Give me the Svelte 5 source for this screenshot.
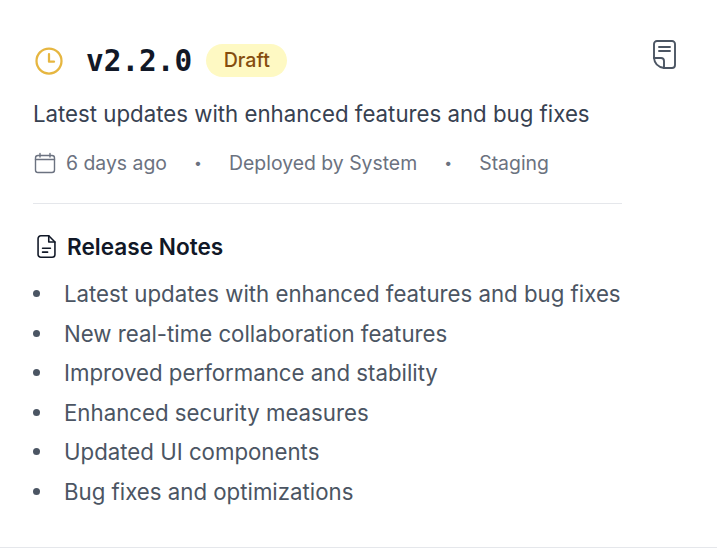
<script>
  const notes = [
    'Latest updates with enhanced features and bug fixes',
    'New real-time collaboration features',
    'Improved performance and stability',
    'Enhanced security measures',
    'Updated UI components',
    'Bug fixes and optimizations'
  ];
</script>

<main class="release">
  <div class="head">
    <div class="main-col">
      <div class="title-row">
        <svg class="clock" width="30" height="30" viewBox="0 0 24 24" fill="none" stroke="#e6b640" stroke-width="1.8" stroke-linecap="round" stroke-linejoin="round">
          <circle cx="12" cy="12" r="10" />
          <path d="M12 6.5V12.5H16" />
        </svg>
        <h2>v2.2.0</h2>
        <span class="badge">Draft</span>
      </div>
      <p class="desc">Latest updates with enhanced features and bug fixes</p>
      <div class="meta">
        <span class="when">
          <svg width="24" height="24" viewBox="0 0 24 24" fill="none" stroke="#6b7280" stroke-width="1.4" stroke-linecap="round" stroke-linejoin="round">
            <path d="M7 2.5V6M17 2.5V6M2.5 8.5H21.5" />
            <rect x="2.5" y="4.5" width="19" height="17" rx="2.5" />
          </svg>
          6 days ago
        </span>
        <span class="dot">•</span>
        <span>Deployed by System</span>
        <span class="dot">•</span>
        <span>Staging</span>
      </div>
      <div class="notes">
        <h3>
          <svg width="27" height="27" viewBox="0 0 24 24" fill="none" stroke="#111827" stroke-width="1.4" stroke-linecap="round" stroke-linejoin="round">
            <path d="M14 2.5H7a2.5 2.5 0 0 0-2.5 2.5v14A2.5 2.5 0 0 0 7 21.5h10a2.5 2.5 0 0 0 2.5-2.5V8z" />
            <path d="M14 2.5V8h5.5M8.5 13.5h7M8.5 17h4.5" />
          </svg>
          Release Notes
        </h3>
        <ul>
          {#each notes as note}
            <li>{note}</li>
          {/each}
        </ul>
      </div>
    </div>
    <button class="doc" aria-label="View notes">
      <svg width="26" height="32" viewBox="0 0 26 32" fill="none" stroke="#4b5563" stroke-width="1.9" stroke-linecap="round" stroke-linejoin="round">
        <path d="M12 29H20a3 3 0 0 0 3-3V5a3 3 0 0 0-3-3H5a3 3 0 0 0-3 3V19" />
        <path d="M2 19H9a3 3 0 0 1 3 3V29C6 28 2.5 25 2 19z" />
        <path d="M7 8H18M7 12H18" />
      </svg>
    </button>
  </div>
</main>

<style>
  :global(body) {
    background: #fff;
    font-family: Inter, "Noto Sans", sans-serif;
  }
  .release {
    height: 548px;
    box-sizing: border-box;
    border-bottom: 1px solid #e5e7eb;
    padding: 33px 33px 0;
  }
  .head {
    display: flex;
    justify-content: space-between;
    align-items: flex-start;
  }
  .main-col { width: 589px; }
  .title-row {
    display: flex;
    align-items: center;
    height: 55px;
  }
  .clock { margin: 0 22px 0 1px; flex: none; }
  h2 {
    margin: 0 14px 0 0;
    font: 700 29.4px "DejaVu Sans Mono", monospace;
    color: #111827;
  }
  .badge {
    background: #fef9c3;
    color: #854d0e;
    font-size: 19.6px;
    font-weight: 500;
    padding: 5px 17.5px;
    border-radius: 999px;
    line-height: 23px;
  }
  .desc {
    margin: 0;
    padding-top: 9px;
    font-size: 22.24px;
    line-height: 33px;
    color: #374151;
  }
  .meta {
    display: flex;
    align-items: center;
    gap: 27.1px;
    margin-top: 19px;
    padding-bottom: 26px;
    border-bottom: 1px solid #e5e7eb;
    font-size: 19.4px;
    line-height: 28px;
    color: #6b7280;
  }
  .when { display: flex; align-items: center; gap: 9px; }
  .dot { font-size: 14px; }
  .notes { margin-top: 26px; }
  h3 {
    display: flex;
    align-items: center;
    gap: 7px;
    margin: 0 0 14px;
    font-size: 22.6px;
    line-height: 33px;
    font-weight: 600;
    color: #111827;
  }
  ul {
    margin: 0;
    padding: 0;
    list-style: none;
    color: #4b5563;
    font-size: 22.24px;
    line-height: 33px;
  }
  li {
    display: flex;
    align-items: center;
    gap: 24px;
    margin-bottom: 6.6px;
    white-space: nowrap;
  }
  li::before {
    content: "";
    width: 7px;
    height: 7px;
    border-radius: 50%;
    background: #4b5563;
    flex: none;
  }
  .doc {
    border: 0;
    background: none;
    padding: 0;
    margin: 6px 6px 0 0;
    display: flex;
  }
</style>
